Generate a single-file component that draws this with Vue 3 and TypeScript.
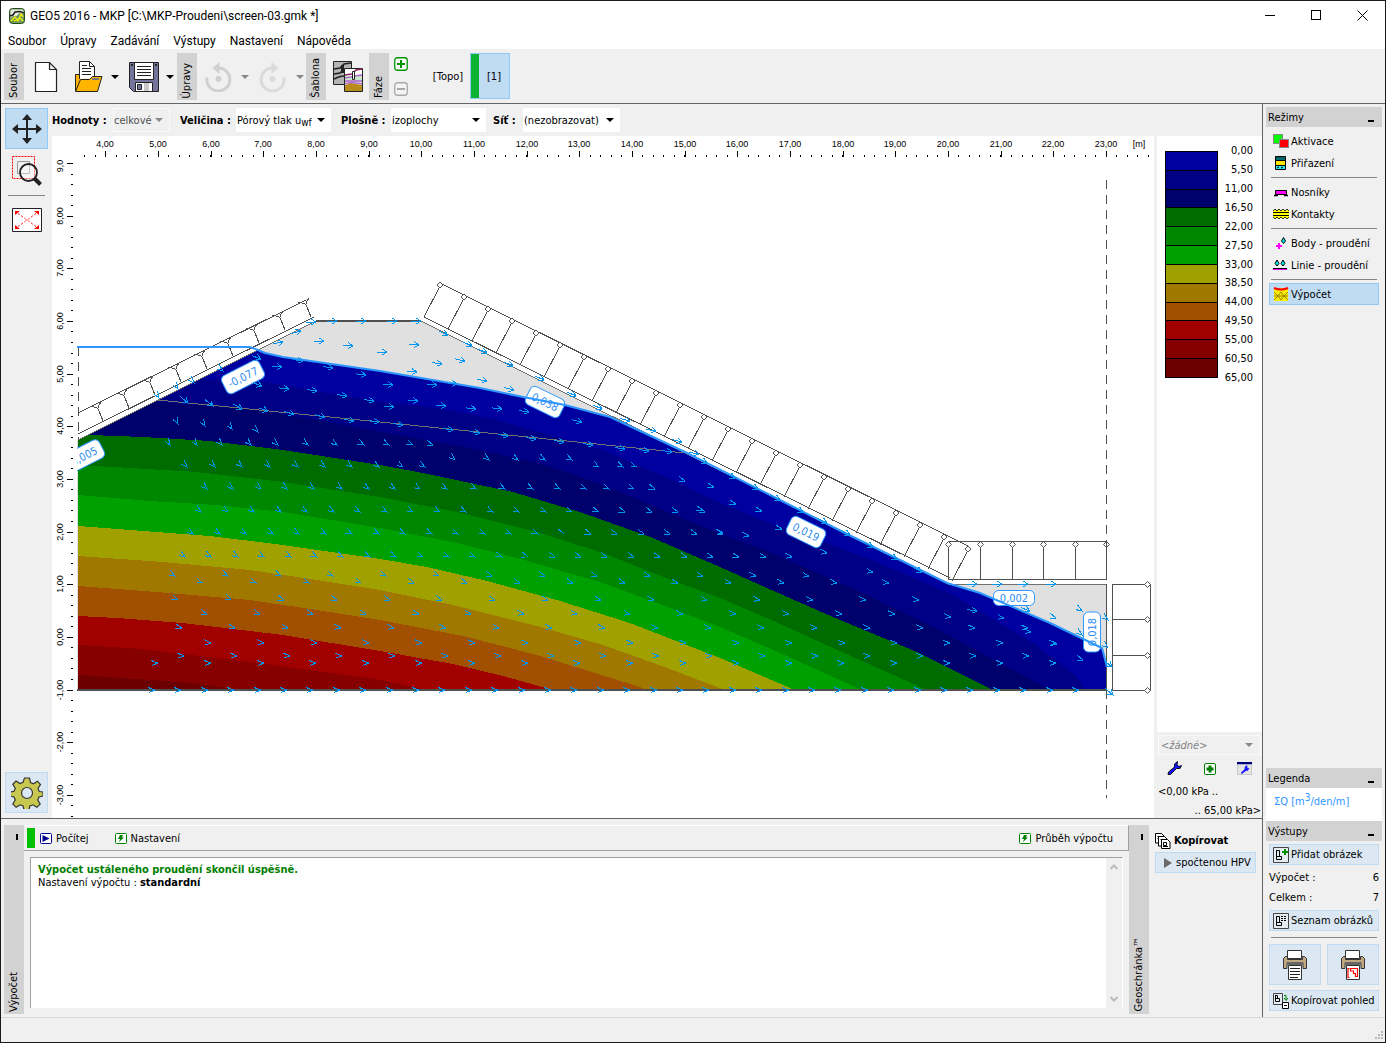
<script setup lang="ts">
import { ref } from 'vue'

type Pt = [number, number]

const menus = ['Soubor', 'Úpravy', 'Zadávání', 'Výstupy', 'Nastavení', 'Nápověda']

const values = ref('celkové')
const quantity = ref('uwf')
const surface = ref('izoplochy')
const mesh = ref('(nezobrazovat)')
const scaleSet = ref('<žádné>')

const palette = [
  '#0000a0', '#000087', '#00006c', '#006c00', '#008700', '#00a000',
  '#a0a000', '#a07800', '#a05000', '#a00000', '#870000', '#6c0000',
]
const scaleLabels = [
  '0,00', '5,50', '11,00', '16,50', '22,00', '27,50', '33,00',
  '38,50', '44,00', '49,50', '55,00', '60,50', '65,00',
]

const contours: string[] = [
  '78,300 1107,300 1107,690',
  '78,378 200,379 263,382 380,402 437,408 493,419 603,450 670,479 720,503 767,522 867,558 953,595 1033,643 1075,675 1085,690',
  '78,400 140,401 160,402 250,409 317,420 387,433 470,448 537,463 570,473 620,492 670,513 720,534 767,551 850,587 933,627 1050,690',
  '78,435 90,435 143,437 210,441 283,450 380,465 423,473 513,492 583,513 653,538 720,567 767,588 833,617 917,652 993,690',
  '78,465 97,466 197,472 283,482 380,497 457,512 537,532 603,553 653,573 720,598 767,618 833,648 927,690',
  '78,495 150,501 217,505 283,512 380,528 457,543 517,558 603,583 670,608 720,627 780,653 862,690',
  '78,526 143,531 210,536 283,545 380,559 427,567 487,581 557,600 630,623 720,658 795,690',
  '78,556 163,562 250,570 317,580 380,590 453,605 537,626 603,645 670,669 725,690',
  '78,586 157,592 250,600 317,610 380,620 463,636 537,655 637,686 647,690',
  '78,616 117,618 183,623 283,635 380,651 453,664 503,676 553,690',
  '78,645 130,648 183,654 250,662 317,671 380,680 428,690',
  '78,675 150,680 193,683 240,690',
]

const domain = '77,440 158,400 258,350 316,321 421,321 948,584 1107,584 1107,690 77,690'
const waterPts = '258,350 265,353 283,357 380,371 480,388 523,397 565,405 610,417 653,437 685,452 780,500 843,532 947,583 980,593 1050,623 1102,648 1107,667'
const wet = `78,440 158,400 ${waterPts} 1107,690 78,690`

// Flow arrows: rows share a height and a direction that flattens downstream.
interface Row { y: number; xs: number[]; a: number; b: number }
const step = (from: number, to: number, by: number): number[] => {
  const out: number[] = []
  for (let x = from; x <= to; x += by) out.push(Math.round(x))
  return out
}
const rows: Row[] = [
  { y: 690, xs: step(155, 1100, 26.4), a: 0, b: 0 },
  { y: 663, xs: step(158, 1060, 52.8), a: 0, b: 0 },
  { y: 656, xs: step(184, 1040, 52.8), a: 4, b: 2 },
  { y: 643, xs: step(211, 1060, 52.8), a: 6, b: 2 },
  { y: 628, xs: step(182, 1035, 52.9), a: 14, b: 4 },
  { y: 614, xs: step(207, 900, 52.9), a: 18, b: 5 },
  { y: 600, xs: step(178, 930, 52.9), a: 24, b: 6 },
  { y: 583, xs: step(203, 900, 52.8), a: 28, b: 8 },
  { y: 576, xs: step(175, 860, 52.8), a: 32, b: 10 },
  { y: 557, xs: step(185, 800, 26.4), a: 36, b: 12 },
  { y: 534, xs: step(193, 725, 26.5), a: 38, b: 16 },
  { y: 512, xs: step(201, 715, 26.5), a: 40, b: 18 },
  { y: 489, xs: [207, 233, 261, 287, 314, 342, 369, 395, 420, 447, 476, 505, 533, 560, 586, 609, 634, 655], a: 46, b: 22 },
  { y: 467, xs: [187, 215, 242, 270, 298, 325, 352, 379, 403, 425, 599, 623, 637], a: 50, b: 28 },
  { y: 460, xs: [455, 489, 518, 545, 572], a: 45, b: 30 },
  { y: 445, xs: [170, 197, 222, 251, 278, 308, 337, 364, 389, 413, 433], a: 58, b: 20 },
]
const singles: [number, number, number][] = [
  [178, 424, 65], [205, 426, 60], [232, 429, 55], [258, 432, 50],
  [159, 398, 60], [178, 389, 60], [194, 383, 50], [223, 371, 40],
  [685, 481, 18], [714, 487, 14], [703, 510, 14], [736, 504, 14], [762, 511, 14],
  [723, 533, 12], [749, 536, 12], [782, 529, 14], [827, 553, 12], [873, 572, 10],
  [951, 617, 8], [1004, 618, 10], [1056, 618, 20], [1082, 611, 35], [1108, 620, 40],
  [1031, 632, 8], [1082, 635, 40], [1108, 648, 45], [1057, 644, 8], [1083, 660, 20],
]
const shafted: [number, number, number][] = [
  [188, 403, 40], [213, 406, 38], [242, 409, 30], [268, 411, 18], [294, 414, 14], [325, 417, 12],
  [354, 421, 10], [379, 422, 8], [403, 425, 8], [453, 430, 8], [480, 433, 8], [508, 436, 8],
  [536, 439, 8], [564, 442, 8], [593, 445, 8], [625, 449, 8], [649, 451, 8], [672, 452, 8],
  [261, 359, 20], [282, 367, 4], [262, 386, 20], [289, 389, 6], [317, 391, 8], [347, 396, 8],
  [374, 401, 8], [303, 361, 8], [333, 368, 8], [366, 375, 6], [283, 342, -10], [301, 331, -14],
  [316, 322, 0], [337, 321, 0], [366, 321, 0], [397, 321, 0], [421, 321, 0], [324, 341, 0],
  [353, 346, 4], [387, 352, 0], [419, 345, 4], [448, 335, 22], [472, 346, 24], [487, 353, 24],
  [513, 366, 24], [544, 380, 24], [576, 396, 24], [602, 409, 24], [630, 421, 14], [656, 431, 10],
  [682, 442, 14], [699, 454, 10], [442, 364, 8], [465, 361, 12], [417, 372, 2], [487, 381, 10],
  [514, 390, 14], [437, 385, 4], [457, 384, 6], [393, 385, 4], [418, 401, 4], [394, 407, 4],
  [446, 406, 4], [476, 409, 6], [502, 409, 6], [529, 412, 8], [582, 422, 12], [707, 463, 26],
  [735, 478, 26], [758, 489, 26], [780, 500, 26], [803, 512, 26], [827, 523, 26], [850, 535, 26],
  [873, 547, 26], [897, 559, 26], [922, 572, 26], [977, 584, 0], [1002, 584, 0], [1028, 584, 0],
  [1056, 584, 0], [977, 611, 8], [1030, 611, 20], [1112, 667, 40], [1113, 695, 40],
]
const plain: [number, number, number][] = [
  ...rows.flatMap((r) =>
    r.xs.map((x, i): [number, number, number] => [x, r.y, r.a + ((r.b - r.a) * i) / Math.max(1, r.xs.length - 1)]),
  ),
  ...singles,
]

const unit = 52.67
const hMajor = Array.from({ length: 20 }, (_, i) => ({ x: Math.round(105.4 + i * unit), t: `${i + 4},00` }))
const hMinor = Array.from({ length: 102 }, (_, i) => Math.round(84 + i * 10.534)).filter((x) => x < 1152)
const vMajor = Array.from({ length: 13 }, (_, i) => ({
  y: Math.round(163 + i * 52.65),
  ty: Math.round(163 + i * 52.65) + (i === 0 ? 3 : 0),
  t: i === 0 ? '9,0' : `${9 - i},00`,
}))
const vMinor = Array.from({ length: 63 }, (_, i) => Math.round(163 + i * 10.53)).filter((y) => y < 818)

const leftFeet: Pt[] = Array.from({ length: 9 }, (_, i) => [103 + i * 26, 421 - i * 13])
const posts = Array.from({ length: 23 }, (_, i) => i)
const flatPosts = [948, 980, 1012, 1043, 1075, 1106]
const sidePosts = [584, 619, 655, 690]

const tags = [
  { x: 243, y: 377, r: -27, w: 42, h: 20, t: '-0,077' },
  { x: 84, y: 456, r: -27, w: 40, h: 20, t: '0,005' },
  { x: 545, y: 402, r: 26, w: 38, h: 20, t: '0,038' },
  { x: 806, y: 532, r: 26, w: 38, h: 20, t: '0,019' },
  { x: 1014, y: 598, r: 0, w: 41, h: 15, t: '0,002' },
  { x: 1092, y: 632, r: -90, w: 40, h: 17, t: '0,018' },
]
</script>

<template>
  <div class="window">
    <header class="titlebar">
      <svg class="app-icon" width="16" height="16" viewBox="0 0 16 16">
        <rect x="0.5" y="0.5" width="15" height="15" rx="3" fill="#6f9a58" stroke="#274a1c" />
        <path d="M1.500 3q0-1.500 1.500-1.500h10q1.500 0 1.500 1.500v3l-4-1-3 3-3 0-3 2z" fill="#e6ecdf" />
        <path d="M1 8l3-1 2-3 5-.5 4 1.500" fill="none" stroke="#222" stroke-width="1.500" />
        <path d="M2 13l4-4 3 4 3-7 2 3M5 13l6-3 3 3" fill="none" stroke="#f4f400" stroke-width="1.200" />
      </svg>
      <h1>GEO5 2016 - MKP [C:\MKP-Proudeni\screen-03.gmk *]</h1>
      <div class="win-buttons">
        <button aria-label="Minimalizovat"><svg width="11" height="11"><path d="M0 5.5h10" stroke="#000" /></svg></button>
        <button aria-label="Maximalizovat"><svg width="11" height="11"><rect x="0.5" y="0.5" width="9" height="9" fill="none" stroke="#000" /></svg></button>
        <button aria-label="Zavřít"><svg width="11" height="11"><path d="M0.5 0.5l10 10M10.5 0.5l-10 10" stroke="#000" /></svg></button>
      </div>
    </header>

    <nav class="menubar">
      <button v-for="m in menus" :key="m">{{ m }}</button>
    </nav>

    <div class="toolbar">
      <span class="strip"><span>Soubor</span></span>
      <button class="tool t-new" aria-label="Nový">
        <svg width="24" height="32" viewBox="0 0 24 32"><path d="M1.5 1.5h14l7 7v22h-21zM15.500 1.500v7h7" fill="#fff" stroke="#222" stroke-width="1.200" /></svg>
      </button>
      <button class="tool t-open" aria-label="Otevřít">
        <svg width="29" height="32" viewBox="0 0 29 32">
          <path d="M1.500 13.500h5l2 3h14v13h-21z" fill="#ffb400" stroke="#222" />
          <path d="M5.500 18v-17.500h10l5 5v12" fill="#fff" stroke="#222" />
          <path d="M15.500 .5v5h5M8 4.500h5M8 7.500h9M8 10.500h9M8 13.500h9" fill="none" stroke="#222" />
          <path d="M1.500 30.500l5-12h9l3-3h9.500l-4.500 15z" fill="#ffb400" stroke="#222" />
          <path d="M18 18h7" stroke="#777" stroke-width="2" />
        </svg>
      </button>
      <button class="drop" aria-label="Otevřít – nabídka"><i class="caret"></i></button>
      <button class="tool t-save" aria-label="Uložit">
        <svg width="30" height="30" viewBox="0 0 30 30">
          <path d="M.5.5h29v29h-25l-4-4z" fill="#74749c" stroke="#222" />
          <path d="M5.500.5h19v17h-19z" fill="#fff" stroke="#222" />
          <path d="M8 4.500h14M8 7.500h14M8 10.500h14M8 13.500h14" stroke="#222" />
          <path d="M6.500 20.500h17v9h-17z" fill="#fff" stroke="#222" />
          <path d="M8.500 22.500h4v5h-4z" fill="#74749c" stroke="#222" /><path d="M15 21h5v8h-5z" fill="#c8c8c8" />
          <path d="M2 3h2M26 3h2" stroke="#222" stroke-width="2" />
        </svg>
      </button>
      <button class="drop" aria-label="Uložit – nabídka"><i class="caret"></i></button>
      <span class="strip after-save"><span>Úpravy</span></span>
      <button class="tool t-undo" aria-label="Zpět" disabled>
        <svg width="27" height="30" viewBox="0 0 27 30">
          <path d="M2 15.500a11.500 11.500 0 1 0 11.500-9.500" fill="none" stroke="#d0d0d0" stroke-width="3" />
          <path d="M7.500 6l7-6v12z" fill="#d0d0d0" /><circle cx="13.500" cy="17" r="3" fill="#d0d0d0" />
        </svg>
      </button>
      <button class="drop" aria-label="Zpět – nabídka" disabled><i class="caret dim"></i></button>
      <button class="tool t-redo" aria-label="Znovu" disabled>
        <svg width="27" height="30" viewBox="0 0 27 30">
          <path d="M25 15.500a11.500 11.500 0 1 1-11.500-9.500" fill="none" stroke="#dadada" stroke-width="3" />
          <path d="M19.500 6l-7-6v12z" fill="#dadada" /><circle cx="13.500" cy="17" r="3" fill="#dadada" />
        </svg>
      </button>
      <button class="drop" aria-label="Znovu – nabídka" disabled><i class="caret dim"></i></button>
      <span class="strip"><span>Šablona</span></span>
      <button class="tool t-template" aria-label="Šablona">
        <svg width="30" height="31" viewBox="0 0 30 31">
          <path d="M.5.5h18v23h-18z" fill="#b4b4b4" stroke="#222" />
          <path d="M1 8l6-1 4-4 7-1M1 13l6-1 4-3M1 18c4-2 6-3 10-3" fill="none" stroke="#222" stroke-width="1.600" />
          <path d="M9.500 4v8" stroke="#222" stroke-width="3" />
          <path d="M11.500 7.500h18v23h-18z" fill="#fff" stroke="#222" />
          <path d="M12 15h17v8H12z" fill="#c9e8c8" /><path d="M12 24l6-2 11 2v6H12z" fill="#b98b1c" />
          <path d="M12 14l7-1 4-4 6-1" fill="none" stroke="#8b2060" stroke-width="1.500" />
          <path d="M12 17c5 0 7-2 17-3M12 20h17M12 23c6-3 10-1 17 0" fill="none" stroke="#b060d0" stroke-width="1.300" />
          <path d="M19.500 10.500h2v8h-2z" fill="#fff" stroke="#222" />
        </svg>
      </button>
      <span class="strip"><span>Fáze</span></span>
      <div class="phase-edit">
        <button aria-label="Přidat fázi"><svg width="14" height="14" viewBox="0 0 14 14"><rect x=".75" y=".75" width="12.500" height="12.500" rx="2.500" fill="#fff" stroke="#009500" stroke-width="1.300" /><path d="M3 7h8M7 3v8" stroke="#009500" stroke-width="2" /></svg></button>
        <button aria-label="Odebrat fázi" disabled><svg width="14" height="14" viewBox="0 0 14 14"><rect x=".75" y=".75" width="12.500" height="12.500" rx="2.500" fill="#f4f4f4" stroke="#a8a8a8" stroke-width="1.300" /><path d="M3 7h8" stroke="#a8a8a8" stroke-width="2" /></svg></button>
      </div>
      <button class="topo">[Topo]</button>
      <button class="phase"><i></i><span>[1]</span></button>
    </div>

    <div class="main">
      <div class="left-col">
        <div class="workspace">
          <aside class="side-tools">
            <button class="big active" aria-label="Posun">
              <svg width="30" height="30" viewBox="0 0 30 30"><path d="M15 4v22M4 15h22" stroke="#222" stroke-width="2" /><path d="M15 0l5 6H10zM15 30l5-6H10zM0 15l6-5v10zM30 15l-6-5v10z" fill="#222" /></svg>
            </button>
            <button class="big lens" aria-label="Lupa">
              <svg width="30" height="31" viewBox="0 0 30 31">
                <path d="M.5.5h22v22H.5z" fill="none" stroke="#f00" stroke-dasharray="2 1" />
                <path d="M5.500 5.500h12v12h-12z" fill="none" stroke="#999" />
                <circle cx="16.500" cy="16.500" r="8.500" fill="#ffffff60" stroke="#222" stroke-width="1.800" />
                <path d="M22.500 22.500l6 6" stroke="#222" stroke-width="4" />
              </svg>
            </button>
            <hr />
            <button class="big fit" aria-label="Celý pohled">
              <svg width="30" height="24" viewBox="0 0 30 24">
                <path d="M.5.5h29v23H.5z" fill="#fff" stroke="#222" />
                <path d="M6 5.500l7 5M24 5.500l-7 5M6 18.500l7-5M24 18.500l-7-5" stroke="#f00" stroke-dasharray="2 2" />
                <path d="M12.500 10l2 2-2 2M17.500 10l-2 2 2 2" fill="none" stroke="#f66" />
                <path d="M3 3h5l-5 4zM27 3h-5l5 4zM3 21h5l-5-4zM27 21h-5l5-4z" fill="#f00" />
              </svg>
            </button>
            <button class="big gear" aria-label="Nastavení zobrazení">
              <svg width="32" height="32" viewBox="-16 -16 32 32">
                <path d="M-2.500-15h5l1 4.500 3 1.300 4-2.600 3 3.300-2.500 4 1.300 3 3.700.5v4l-4 1-1.300 3 2.500 4-3.300 3.300-4-2.500-3 1.200-.9 4h-5l-.9-4-3-1.200-4 2.500-3.300-3.300 2.500-4-1.300-3-4-1v-4l4-.7 1.300-3-2.500-4 3.200-3.300 4 2.500 3-1.200z" fill="#c8c850" stroke="#333" stroke-width="1.200" />
                <circle r="5.500" fill="#dbe8f3" stroke="#333" stroke-width="1.200" />
              </svg>
            </button>
          </aside>

          <div class="view">
            <div class="filters">
              <label class="f1" for="sel-values">Hodnoty :</label>
              <span class="combo w57 dis"><select id="sel-values" v-model="values" disabled><option>celkové</option></select><i class="caret dim"></i></span>
              <label class="f2" for="sel-q">Veličina :</label>
              <span class="combo w95"><select id="sel-q" v-model="quantity" class="ghost"><option value="uwf">Pórový tlak</option></select><span class="rich" aria-hidden="true">Pórový tlak u<sub>wf</sub></span><i class="caret"></i></span>
              <label class="f3" for="sel-surface">Plošně :</label>
              <span class="combo w95"><select id="sel-surface" v-model="surface"><option>izoplochy</option></select><i class="caret"></i></span>
              <label class="f4" for="sel-mesh">Síť :</label>
              <span class="combo w97"><select id="sel-mesh" v-model="mesh"><option>(nezobrazovat)</option></select><i class="caret"></i></span>
            </div>

            <svg class="plot" viewBox="52 136 1102 682">
              <defs>
                <clipPath id="wet"><polygon :points="wet" /></clipPath>
                <clipPath id="frame"><rect x="77" y="136" width="1077" height="682" /></clipPath>
                <path id="arr" d="M-7-2.500L0 0L-6 2.500" />
                <path id="shaft" d="M-10 0H0M-5-3L0 0L-5 3" />
                <path id="dia" d="M-3 0L0-3L3 0L0 3z" />
              </defs>

              <g class="ticks">
                <rect v-for="m in hMajor" :key="'a' + m.x" :x="m.x" y="151" width="1" height="6" />
                <rect v-for="x in hMinor" :key="'b' + x" :x="x" y="155" width="1" height="2" />
                <rect v-for="m in vMajor" :key="'c' + m.y" x="67" :y="m.y" width="6" height="1" />
                <rect v-for="y in vMinor" :key="'d' + y" x="71" :y="y" width="2" height="1" />
              </g>
              <g class="tick-labels">
                <text v-for="m in hMajor" :key="m.t" :x="m.x" y="147">{{ m.t }}</text>
                <text x="1139" y="147">[m]</text>
                <text v-for="m in vMajor" :key="m.t + 'v'" :transform="`translate(63 ${m.ty}) rotate(-90)`">{{ m.t }}</text>
              </g>

              <g clip-path="url(#frame)">
                <polygon :points="domain" fill="#e0e0e0" />
                <g clip-path="url(#wet)" shape-rendering="crispEdges">
                  <polygon v-for="(c, i) in contours" :key="i" :points="`${c} 78,690`" :fill="palette[i]" />
                </g>

                <g class="struct">
                  <path d="M158 400L380 422L685 453" class="thin" />
                  <path d="M78 440L316 321" class="thin" />
                  <path d="M421 321L948 584H1107" class="thin" />
                  <path d="M316 321H421M77 690H1107" class="heavy" />
                  <path d="M1106.500 690V584" />
                  <path d="M78 413L306 300M78 434L314 317" />
                  <path v-for="(f, i) in leftFeet" :key="i" :d="`M${f[0]} ${f[1]}l-4-10q-1-5-9-4M${f[0] - 5} ${f[1] - 13}q0-2 3-6`" />
                  <path d="M440 283L968 546M424 317L950 578" />
                  <path v-for="k in posts" :key="'p' + k" :d="`M${424 + k * 24} ${317 + k * 12}L${439 + k * 24} ${288 + k * 12}`" />
                  <path d="M948 541.500H1106.500M948 579.500H1106.500" />
                  <path v-for="x in flatPosts" :key="'f' + x" :d="`M${x + 0.5} 541V580`" />
                  <path d="M1112.500 584.500H1150.500V690.500H1112.500zM1112 619.500H1145M1112 655.500H1145" />
                </g>
                <g class="joints">
                  <use v-for="k in posts" :key="'j' + k" href="#dia" :x="440 + k * 24" :y="285 + k * 12" />
                  <use v-for="x in flatPosts" :key="'fj' + x" href="#dia" :x="x + 0.5" y="544.5" />
                  <use v-for="y in sidePosts" :key="'sj' + y" href="#dia" x="1147.5" :y="y + 0.5" />
                </g>
                <path d="M1106.500 180V798M78.500 347V440" class="dash" />

                <g class="tags">
                  <g v-for="t in tags" :key="t.t" :transform="`translate(${t.x} ${t.y}) rotate(${t.r})`">
                    <rect :x="-t.w / 2" :y="-t.h / 2" :width="t.w" :height="t.h" rx="5" />
                    <text y="4">{{ t.t }}</text>
                  </g>
                </g>
                <polyline class="water" :points="`77,347 250,347 ${waterPts}`" />
                <g class="arrows">
                  <use v-for="(a, i) in plain" :key="i" href="#arr" :transform="`translate(${a[0]} ${a[1]}) rotate(${a[2]})`" />
                  <use v-for="(a, i) in shafted" :key="'s' + i" href="#shaft" :transform="`translate(${a[0]} ${a[1]}) rotate(${a[2]})`" />
                </g>
              </g>
            </svg>
          </div>

          <aside class="scale">
            <div class="scale-body">
              <ul class="swatches"><li v-for="c in palette" :key="c" :style="{ background: c }"></li></ul>
              <ul class="scale-labels"><li v-for="l in scaleLabels" :key="l">{{ l }}</li></ul>
            </div>
            <div class="scale-foot">
              <span class="combo dis none"><select v-model="scaleSet" aria-label="Stupnice" disabled><option>&lt;žádné&gt;</option></select><i class="caret dim"></i></span>
              <div class="scale-icons">
                <button aria-label="Upravit stupnici"><svg width="15" height="15" viewBox="0 0 15 15"><path d="M1 13.500l.5-2.500 6-5V3l3-2.500-.5 3.500 2 1.500 2.500-1-1.500 3h-3.500l-6 6z" fill="#1414ff" stroke="#000" stroke-width=".9" /></svg></button>
                <button aria-label="Přidat stupnici"><svg width="12" height="12" viewBox="0 0 12 12"><rect x=".5" y=".5" width="11" height="11" rx="1.500" fill="#fff" stroke="#008000" /><path d="M2.500 6h7M6 2.500v7" stroke="#008000" stroke-width="3" /></svg></button>
                <button aria-label="Správce stupnic"><svg width="15" height="13" viewBox="0 0 15 13"><rect x=".5" y=".5" width="14" height="12" fill="#e4e4e4" stroke="#aaa" stroke-dasharray="1 1" /><path d="M0 1h15" stroke="#00007a" stroke-width="2.500" /><path d="M4 11l4-4V5l2-1.500V6l2 .5-1.500 2H9l-4 3z" fill="#1414ff" stroke="#1414ff" stroke-width=".6" /></svg></button>
              </div>
              <p>&lt;0,00 kPa ..</p>
              <p class="right">.. 65,00 kPa&gt;</p>
            </div>
          </aside>
        </div>

        <div class="dock">
          <span class="strip tall"><b class="pin"></b><span>Výpočet</span></span>
          <section class="calc">
            <div class="calc-bar">
              <i class="status"></i>
              <button><svg width="12" height="11" viewBox="0 0 12 11"><rect x=".5" y=".5" width="11" height="10" rx="1" fill="#fff" stroke="#000090" /><path d="M2.500 2v7l7-3.500z" fill="#000090" /></svg>Počítej</button>
              <button class="b2"><svg width="12" height="11" viewBox="0 0 12 11"><rect x=".5" y=".5" width="11" height="10" rx="1" fill="#fff" stroke="#008000" /><path d="M5 2h3L7 4.500h2L4 9l1-3H3z" fill="#008000" /></svg>Nastavení</button>
              <button class="b3"><svg width="12" height="11" viewBox="0 0 12 11"><rect x=".5" y=".5" width="11" height="10" rx="1" fill="#fff" stroke="#008000" /><path d="M5 2h3L7 4.500h2L4 9l1-3H3z" fill="#008000" /></svg>Průběh výpočtu</button>
            </div>
            <div class="log">
              <div class="log-text">
                <p class="ok">Výpočet ustáleného proudění skončil úspěšně.</p>
                <p>Nastavení výpočtu : <b>standardní</b></p>
              </div>
              <div class="scrollbar">
                <svg width="8" height="6"><path d="M.5 5L4 1.500 7.500 5" fill="none" stroke="#bbb" stroke-width="2" /></svg>
                <svg width="8" height="6"><path d="M.5 1L4 4.500 7.500 1" fill="none" stroke="#bbb" stroke-width="2" /></svg>
              </div>
            </div>
          </section>
          <span class="strip tall"><b class="pin"></b><span>Geoschránka™</span></span>
          <section class="clip">
            <h2><svg width="16" height="16" viewBox="0 0 16 16"><g fill="#fff" stroke="#000"><path d="M.5.500h6l2.500 2.500v7h-8.500zM2.500 3.500h4M2.500 5.500h4" /><path d="M3.500 3.500h6l2.500 2.500v7h-8.500zM5.500 6.500h4" /><path d="M6.500 6.500h6l2.500 2.500v6.500H6.500z" /><path d="M8.500 9.500h3v3h-3zM8 13.500h5" fill="none" /></g></svg>Kopírovat</h2>
            <button class="soft"><svg width="8" height="10"><path d="M0 0l8 5-8 5z" fill="#6a6a6a" /></svg>spočtenou HPV</button>
          </section>
        </div>
      </div>

      <aside class="panel">
        <h2 class="head"><span>Režimy</span><b></b></h2>
        <div class="modes">
          <button><svg width="16" height="14" viewBox="0 0 16 14"><rect x=".5" y=".5" width="9" height="9" fill="#0f0" stroke="#888" /><rect x="6.500" y="5.500" width="9" height="8" fill="#f00" stroke="#888" /></svg>Aktivace</button>
          <button><svg width="16" height="14" viewBox="0 0 16 14"><path d="M2.500.5h10v4h-10z" fill="#006868" stroke="#000" /><path d="M2.500 4.500h10v5h-10z" fill="#ffe600" stroke="#000" /><path d="M2.500 9.500h10v4h-10z" fill="#28e8f8" stroke="#000" /><path d="M4 12l2-1M8 12l2-1" stroke="#000" /></svg>Přiřazení</button>
          <hr />
          <button><svg width="16" height="14" viewBox="0 0 16 14"><path d="M2.500 5.500h11v4H2.500z" fill="#f0f" stroke="#000" /><path d="M1 10.500h4M11 10.500h4" stroke="#000" stroke-width="1.500" /></svg>Nosníky</button>
          <button><svg width="16" height="14" viewBox="0 0 16 14"><path d="M0 3h16v8H0z" fill="#ff0" /><path d="M0 4l2-2 2 2 2-2 2 2 2-2 2 2 2-2 2 2M0 10l2 2 2-2 2 2 2-2 2 2 2-2 2 2 2-2" fill="none" stroke="#000" stroke-width=".8" /><path d="M0 5.500h16M0 8.500h16" stroke="#000" /></svg>Kontakty</button>
          <hr />
          <button><svg width="16" height="14" viewBox="0 0 16 14"><path d="M3 10h6M6 7v6" stroke="#f0f" stroke-width="2" /><path d="M10.500 1.500l2 3.500-2 2.500-2-2.500z" fill="#0ee" stroke="#000" /></svg>Body - proudění</button>
          <button><svg width="16" height="14" viewBox="0 0 16 14"><path d="M0 10.500h14" stroke="#000" /><path d="M0 11.500h14" stroke="#f0f" /><path d="M4 2l2 3.500L4 8 2 5.500zM10 2l2 3.500-2 2.500-2-2.500z" fill="#0ee" stroke="#000" /></svg>Linie - proudění</button>
          <hr />
          <button class="on"><svg width="16" height="14" viewBox="0 0 16 14"><path d="M1 1h14v13H1z" fill="#fff000" /><path d="M1 5l4 4 3-4 3 4 4-4M1 13l4-4 3 4 3-4 4 4M1 9h14" fill="none" stroke="#988000" /><path d="M1 1q7 3 14 0" fill="none" stroke="#f00" stroke-width="2" /></svg>Výpočet</button>
        </div>
        <div class="spacer"></div>
        <h2 class="head"><span>Legenda</span><b></b></h2>
        <p class="legend">ΣQ [m<sup>3</sup>/den/m]</p>
        <h2 class="head"><span>Výstupy</span><b></b></h2>
        <div class="outputs">
          <button class="soft"><svg width="16" height="16" viewBox="0 0 16 16"><path d="M.5.5h15v15H.5z" fill="#e4ecf2" stroke="#444" /><path d="M3.500 3v9.500h5v-3h-5M3.500 3.500h3v6" fill="none" stroke="#000" /><path d="M9 5h6M12 2v6" stroke="#009000" stroke-width="2" /></svg>Přidat obrázek</button>
          <dl>
            <dt>Výpočet :</dt><dd>6</dd>
            <dt>Celkem :</dt><dd>7</dd>
          </dl>
          <button class="soft"><svg width="16" height="16" viewBox="0 0 16 16"><path d="M.5.5h15v15H.5z" fill="#e4ecf2" stroke="#444" /><path d="M3.500 3v9.500h5v-3h-5M3.500 3.500h3v6" fill="none" stroke="#000" /><path d="M8 3.500h6M8 5.500h6M8 7.500h6" stroke="#000" stroke-dasharray="2 1" /></svg>Seznam obrázků</button>
          <hr />
          <div class="printers">
            <button v-for="n in 2" :key="n" class="soft" :aria-label="n === 1 ? 'Tisk protokolu' : 'Tisk obrázku'">
              <svg width="24" height="30" viewBox="0 0 24 30">
                <path d="M4.500.5h14v8h-14z" fill="#fff" stroke="#333" />
                <path d="M2.500 6.500h2v3h15v-3h2l2 2v10h-3.500v-4h-16v4H.5v-10z" fill="#c0a880" stroke="#333" />
                <path d="M3.500 13.500h17" stroke="#666" stroke-width="3" />
                <path d="M5.500 15.500h13v14h-13z" fill="#fff" stroke="#333" />
                <path v-if="n === 1" d="M7 18.500h10M7 21.500h10M7 24.500h10M7 27.500h8" stroke="#222" />
                <path v-else d="M8.500 18.500H7v9h1.500M9.500 18.500h7v8h-2v-3h-2v-2.500h-3z" fill="none" stroke="#f00" stroke-width="1.200" />
              </svg>
            </button>
          </div>
          <button class="soft"><svg width="16" height="16" viewBox="0 0 16 16"><path d="M.5.5h9v11h-9z" fill="#e4ecf2" stroke="#444" /><path d="M2.500 2v6.500h4v-3h-4M2.500 2.500h2v3" fill="none" stroke="#000" /><path d="M11 2.500h2v4M11 5l2 2.500L15 5" fill="none" stroke="#008000" /><path d="M9.500 9.500h6v6h-6zM11 12.500h3" fill="#fff" stroke="#000" /></svg>Kopírovat pohled</button>
        </div>
      </aside>
    </div>

    <footer class="statusbar">
      <svg width="9" height="9"><path d="M7 0h2v2H7zM7 3h2v2H7zM4 3h2v2H4zM7 6h2v2H7zM4 6h2v2H4zM1 6h2v2H1z" fill="#b8b8b8" /></svg>
    </footer>
  </div>
</template>

<style>
body { margin: 0; }
</style>

<style scoped>
* { box-sizing: border-box; }
button, select { font: inherit; color: inherit; }
button { border: 0; background: none; padding: 0; margin: 0; }
h1, h2, p, ul, dl, dd { margin: 0; padding: 0; font-weight: 400; font-size: 11px; }
ul { list-style: none; }
svg { display: block; flex: none; }
hr { border: 0; border-top: 1px solid #848484; margin: 0; }

.window {
  min-height: 100vh;
  display: flex;
  flex-direction: column;
  border: 1px solid #1a1a1a;
  background: #f0f0f0;
  font: 11px/13px "DejaVu Sans Condensed", "Noto Sans", sans-serif;
  color: #000;
}
.titlebar { display: flex; align-items: center; height: 29px; background: #fff; padding-left: 8px; }
.titlebar h1 { flex: 1; font: 12px/16px Roboto, sans-serif; margin-left: 5px; }
.win-buttons { display: flex; }
.win-buttons button { width: 46px; height: 29px; display: grid; place-items: center; }
.menubar { display: flex; gap: 14px; height: 19px; background: #fff; padding: 0 7px; }
.menubar button { font: 12px/22px Roboto, sans-serif; }

.toolbar { display: flex; align-items: center; height: 55px; padding: 1px 0 0 3px; border-bottom: 1px solid #646464; }
.strip { display: flex; flex-direction: column; justify-content: flex-end; align-items: center; width: 20px; height: 47px; background: #d2d2d2; flex: none; padding-bottom: 2px; }
.strip > span { writing-mode: vertical-rl; text-orientation: sideways; transform: rotate(180deg); line-height: 14px; }
.strip.tall { height: auto; padding-top: 9px; justify-content: space-between; }
.pin { width: 2px; height: 6px; background: #000; margin-left: 6px; }
.tool { display: grid; place-items: center; }
.t-new { margin: 0 16px 0 10px; }
.t-open { margin-right: 6px; }
.t-save { margin: 0 5px 0 9px; }
.after-save { margin-left: 2px; }
.t-undo { margin: 0 7px 0 8px; }
.t-redo { margin: 0 8px 0 9px; }
.t-template { margin: 0 6px 0 7px; }
.drop { width: 11px; height: 30px; display: grid; place-items: center; }
.t-redo + .drop { margin-right: 1px; }
.caret { width: 0; height: 0; border: 4px solid transparent; border-top-color: #000; border-bottom: 0; flex: none; }
.caret.dim { border-top-color: #888; }
.phase-edit { display: flex; flex-direction: column; gap: 11px; margin-left: 5px; }
.topo { margin-left: 24px; width: 32px; white-space: nowrap; }
.phase { display: flex; align-items: center; width: 40px; height: 46px; margin-left: 6px; background: #c0dcf3; border: 1px solid #90c8f6; margin-bottom: 1px; }
.phase i { width: 8px; align-self: stretch; background: #0ab432; }
.phase span { flex: 1; text-align: center; }

.main { display: flex; flex: 1; }
.left-col { flex: 1; min-width: 0; display: flex; flex-direction: column; border-right: 1px solid #646464; }
.workspace { display: flex; border-bottom: 1px solid #646464; }
.side-tools { width: 51px; flex: none; display: flex; flex-direction: column; padding: 4px 4px 5px; gap: 1px; }
.big { width: 43px; height: 41px; display: grid; place-items: center; border: 1px solid transparent; }
.big.active { background: #c0dcf3; border-color: #90c8f6; }
.big.lens { padding-top: 2px; }
.side-tools hr { margin: 3px 3px 0; }
.gear { margin-top: auto; background: #dbe8f3; border-color: #c0dcf3; }
.fit { margin-top: 2px; }
.view { flex: 1; min-width: 0; }
.filters { display: flex; align-items: center; height: 32px; }
.filters label { font-weight: 700; white-space: nowrap; }
.f1 { width: 61px; }
.f2 { width: 56px; margin-left: 10px; }
.f3 { width: 50px; margin-left: 10px; }
.f4 { width: 30px; margin-left: 7px; }
.combo { position: relative; display: flex; align-items: center; height: 24px; background: #fff; padding-right: 6px; flex: none; }
.combo select { appearance: none; border: 0; background: none; padding: 0 0 0 1px; margin: 0; flex: 1; min-width: 0; height: 22px; outline: 0; opacity: 1; }
.combo.dis { background: #f0f0f0; border: 1px solid #fafafa; color: #505050; }
.combo.dis select { padding-left: 0; }
.combo .ghost { color: transparent; }
.rich { position: absolute; left: 1px; top: 6px; line-height: 13px; pointer-events: none; white-space: nowrap; }
.rich sub { font-size: 10px; line-height: 0; vertical-align: -2px; }
.w57 { width: 57px; }
.w95 { width: 95px; }
.w97 { width: 97px; }

.plot { width: 100%; background: #fff; }
.ticks { fill: #000; shape-rendering: crispEdges; }
.tick-labels text { font: 9px "Liberation Sans", sans-serif; text-anchor: middle; }
.struct { shape-rendering: crispEdges; }
.struct path { fill: none; stroke: #505050; stroke-width: 1; }
.struct .thin { stroke: #707070; }
.struct .heavy { stroke-width: 2; }
.joints { fill: #fff; stroke: #505050; }
.dash { fill: none; stroke: #505050; stroke-dasharray: 9 6; shape-rendering: crispEdges; }
.water { fill: none; stroke: #2d96ff; stroke-width: 2; }
.tags rect { fill: #fff; stroke: #2d96ff; }
.tags text { fill: #2d8cf0; font: 11px "DejaVu Sans Condensed", sans-serif; text-anchor: middle; }
.arrows { fill: none; stroke: #0096f0; stroke-width: 1; shape-rendering: crispEdges; }

.scale { width: 105px; margin-left: 3px; flex: none; padding-top: 32px; display: flex; flex-direction: column; }
.scale-body { flex: 1; background: #fff; display: flex; padding: 15px 9px 0 8px; }
.swatches { width: 53px; height: 227px; border: 1px solid #000; border-bottom: 0; display: flex; flex-direction: column; }
.swatches li { flex: 1; border-bottom: 1px solid #000; }
.scale-labels { flex: 1; height: 246px; margin-top: -9px; display: flex; flex-direction: column; text-align: right; }
.scale-labels li { flex: 1; line-height: 18px; }
.scale-foot { padding: 3px 1px 0; height: 86px; }
.none { height: 20px; font-style: italic; padding-right: 7px; }
.combo.none { color: #808080; }
.combo.none select { padding-left: 2px; }
.scale-icons { display: flex; align-items: center; height: 27px; padding: 0 9px; justify-content: space-between; }
.scale-foot p { line-height: 19px; white-space: nowrap; }
.right { text-align: right; }

.dock { display: flex; flex: 1; min-height: 198px; padding: 6px 0 3px 3px; }
.calc { flex: 1; min-width: 0; display: flex; flex-direction: column; }
.calc-bar { display: flex; align-items: center; height: 26px; border-top: 1px solid #fff; border-right: 1px solid #a0a0a0; border-bottom: 1px solid #a0a0a0; padding: 0 15px 0 3px; }
.calc-bar button { display: flex; align-items: center; gap: 4px; white-space: nowrap; }
.status { width: 8px; height: 20px; background: #00c000; margin-right: 5px; }
.calc-bar .b2 { margin-left: 26px; }
.calc-bar .b3 { margin-left: auto; }
.log { flex: 1; display: flex; margin: 6px 6px 6px; background: #fff; border-top: 1px solid #a0a0a0; border-left: 1px solid #a0a0a0; border-right: 1px solid #fff; }
.log-text { flex: 1; padding: 5px 7px; }
.log-text .ok { color: #008000; font-weight: 700; }
.scrollbar { width: 16px; background: #f0f0f0; display: flex; flex-direction: column; justify-content: space-between; align-items: center; padding: 6px 0; }
.clip { width: 113px; padding: 7px 6px; }
.clip h2 { display: flex; align-items: center; gap: 3px; font-weight: 700; height: 17px; }
.soft { display: flex; align-items: center; background: #dbe8f3; border: 1px solid #c0dcf3; white-space: nowrap; }
.clip .soft { width: 101px; height: 21px; margin-top: 3px; padding-left: 8px; gap: 4px; }

.panel { width: 122px; flex: none; padding: 3px 3px 6px; display: flex; flex-direction: column; }
.head { display: flex; justify-content: space-between; align-items: center; height: 20px; background: #d2d2d2; padding: 0 8px 0 2px; }
.head b { width: 6px; height: 2px; background: #000; margin-top: 7px; }
.modes { padding: 3px 3px 0; }
.modes button { display: flex; align-items: center; gap: 2px; width: 110px; height: 22px; padding-left: 4px; white-space: nowrap; }
.modes hr { margin: 3px 2px; }
.modes .on { background: #c0dcf3; border: 1px solid #90c8f6; padding-left: 3px; }
.spacer { flex: 1; }
.legend { height: 33px; background: #fff; color: #2d96ff; padding: 6px 8px; line-height: 15px; }
.legend sup { font-size: 10px; line-height: 0; vertical-align: 4px; }
.outputs { padding: 3px 3px 0; }
.outputs > .soft { width: 110px; height: 21px; padding-left: 3px; gap: 2px; }
.outputs dl { display: grid; grid-template-columns: 1fr auto; line-height: 20px; padding: 3px 0 2px; }
.outputs hr { margin: 6px 2px 6px; }
.printers { display: flex; gap: 6px; margin-bottom: 5px; }
.printers .soft { width: 52px; height: 41px; justify-content: center; }
.statusbar { height: 25px; border-top: 1px solid #d8d8d8; display: flex; justify-content: flex-end; align-items: flex-end; padding: 2px; }
</style>
